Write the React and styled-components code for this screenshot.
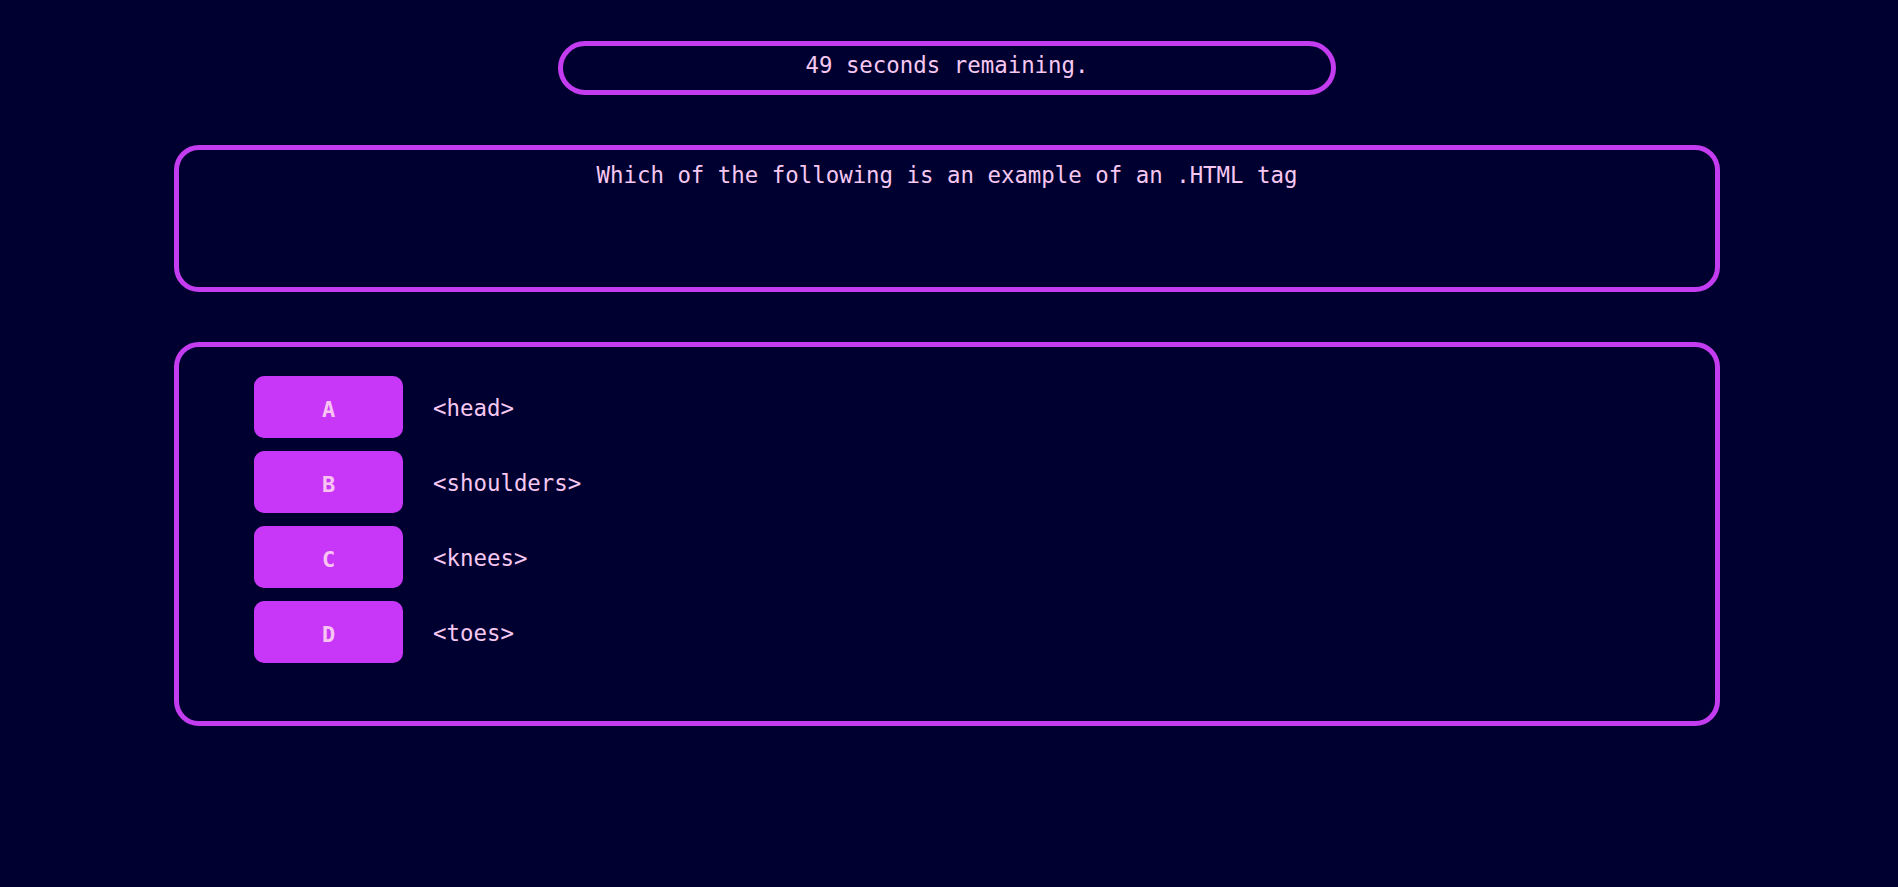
import React from 'react';
import styled, { createGlobalStyle } from 'styled-components';

const GlobalStyle = createGlobalStyle`
  html, body {
    margin: 0;
    padding: 0;
    background-color: #000030;
  }
  body {
    font-family: "DejaVu Sans Mono", "Liberation Mono", monospace;
    color: #f6c8f1;
  }
`;

const Page = styled.main`
  min-height: 100vh;
  display: flex;
  flex-direction: column;
  align-items: center;
  padding: 41px 4px 0 0;
  box-sizing: border-box;
  gap: 50px;
`;

const Timer = styled.div`
  box-sizing: border-box;
  width: 778px;
  height: 54px;
  border: 5px solid #c33cf0;
  border-radius: 27px;
  display: flex;
  align-items: center;
  justify-content: center;
  padding-bottom: 5px;
  font-size: 22.4px;
  line-height: 1.2;
`;

const Panel = styled.section`
  box-sizing: border-box;
  width: 1546px;
  height: ${(p) => p.height}px;
  border: 5px solid #c33cf0;
  border-radius: 25px;
`;

const Question = styled.h2`
  margin: 0;
  padding-top: 12px;
  text-align: center;
  font-size: 22.4px;
  font-weight: normal;
  line-height: 1.2;
`;

const AnswerList = styled.ul`
  list-style: none;
  margin: 0;
  padding: 29px 0 0 75px;
  display: flex;
  flex-direction: column;
  gap: 13px;
`;

const AnswerRow = styled.li`
  display: flex;
  align-items: center;
  gap: 30px;
`;

const LetterButton = styled.button`
  width: 149px;
  height: 62px;
  border: none;
  border-radius: 10px;
  background-color: #c837f7;
  color: #f9c4f2;
  font-family: "DejaVu Sans Mono", "Liberation Mono", monospace;
  font-size: 22px;
  font-weight: bold;
  cursor: pointer;
  padding: 4px 0 0;
`;

const AnswerText = styled.span`
  font-size: 22.4px;
  line-height: 1.2;
  padding-top: 3px;
`;

const answers = [
  { letter: 'A', text: '<head>' },
  { letter: 'B', text: '<shoulders>' },
  { letter: 'C', text: '<knees>' },
  { letter: 'D', text: '<toes>' },
];

export default function App() {
  return (
    <>
      <GlobalStyle />
      <Page>
        <Timer>49 seconds remaining.</Timer>
        <Panel height={147}>
          <Question>Which of the following is an example of an .HTML tag</Question>
        </Panel>
        <Panel height={384}>
          <AnswerList>
            {answers.map((a) => (
              <AnswerRow key={a.letter}>
                <LetterButton>{a.letter}</LetterButton>
                <AnswerText>{a.text}</AnswerText>
              </AnswerRow>
            ))}
          </AnswerList>
        </Panel>
      </Page>
    </>
  );
}
